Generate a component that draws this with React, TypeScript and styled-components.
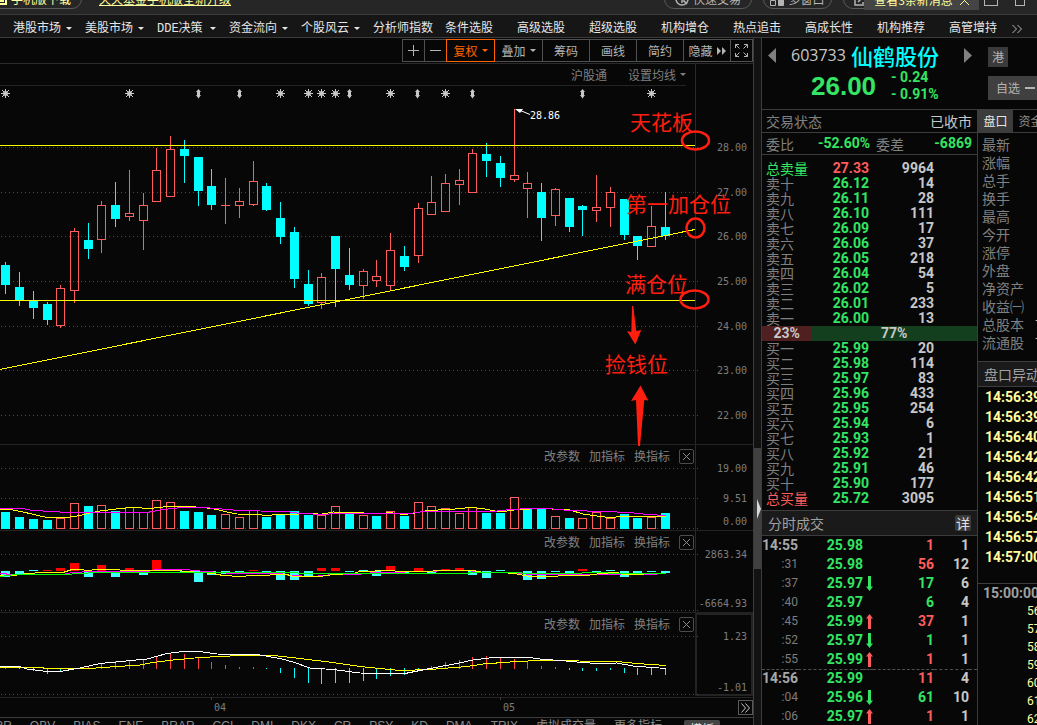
import React from "react";
import styled, { createGlobalStyle } from "styled-components";

const cjk = '"Noto Sans CJK SC", sans-serif';
const c = {
  bg: "#070707",
  line: "#3c3c3c",
  faint: "#232323",
  grey: "#808080",
  light: "#c8c8c8",
  green: "#33e562",
  red: "#ff5c5c",
  cyan: "#00ffff",
  yellow: "#ffffa0",
  mark: "#ff1e0f",
};

const GlobalStyle = createGlobalStyle`
  *, *::before, *::after { box-sizing: border-box; }
  body { margin: 0; background: ${c.bg}; font: 12px/16px ${cjk}; color: ${c.light}; }
  button { margin: 0; padding: 0; border: 0; background: none; color: inherit; font: inherit; white-space: nowrap; cursor: pointer; }
  svg { display: block; flex: none; }
  table { border-collapse: collapse; border-spacing: 0; }
  td, th { padding: 0; font-weight: inherit; text-align: left; }
`;

const Page = styled.div`
  display: flex;
  flex-direction: column;
  height: 100vh;
  overflow: hidden;
`;

/* ---------- top bar ---------- */
const TopBar = styled.header`
  display: flex;
  align-items: flex-end;
  flex: none;
  height: 15px;
  overflow: hidden;
  background: #262626;
  border-bottom: 1px solid ${c.line};
`;
const Pill = styled.button<{ $ml?: number; $w: number; $accent?: boolean }>`
  display: flex;
  align-items: center;
  justify-content: center;
  gap: 4px;
  flex: none;
  width: ${(p) => p.$w}px;
  height: 20px;
  margin: 0 0 5px ${(p) => p.$ml ?? 0}px;
  border: 1px solid #5a5a5a;
  border-radius: 10px;
  color: ${(p) => (p.$accent ? "#ffff9c" : "#b4b4b4")};
`;
const PromoLink = styled.a`
  flex: none;
  margin: 0 auto 7px 17px;
  color: #ffff9c;
  line-height: 16px;
`;
const Notice = styled.div`
  display: flex;
  align-items: center;
  justify-content: center;
  gap: 7px;
  flex: none;
  width: 115px;
  height: 20px;
  margin: 0 5px 4px -14px;
  background: #444;
  color: #ffff9c;
  z-index: 1;
`;
const WindowButton = styled.button<{ $w: number; $gap: number }>`
  flex: none;
  width: ${(p) => p.$w}px;
  height: 12px;
  margin: 0 ${(p) => p.$gap}px 8px 0;
  border: 1px solid #b4b4b4;
`;

/* ---------- navigation ---------- */
const Nav = styled.nav`
  display: flex;
  align-items: center;
  flex: none;
  height: 23px;
  padding: 5px 0 0 13px;
  background: #161616;
  border-bottom: 1px solid ${c.line};
`;
const NavButton = styled.button`
  display: flex;
  align-items: center;
  gap: 5px;
  flex: none;
  width: 72px;
  color: #e6e6e6;
  font-family: "Liberation Mono", ${cjk};
  span { min-width: 48px; text-align: left; }
`;
const MoreButton = styled.button`
  margin-left: -9px;
`;
const Caret = styled.i`
  width: 0;
  height: 0;
  border: 3px solid transparent;
  border-top-color: currentColor;
  border-bottom: 0;
`;

/* ---------- layout ---------- */
const Body = styled.main`
  display: grid;
  grid-template-columns: minmax(0, 1fr) 7px 276px;
  flex: 1;
  min-height: 0;
`;
const ChartColumn = styled.section`
  display: flex;
  flex-direction: column;
  min-width: 0;
  border-right: 1px solid ${c.line};
`;
const Strip = styled.div`
  display: flex;
  flex-direction: column;
  background: #121212;
  padding-top: 410px;
`;
const StripThumb = styled.button`
  display: flex;
  align-items: center;
  justify-content: flex-end;
  height: 121px;
  background: #404040;
`;

/* ---------- chart tools ---------- */
const Toolbar = styled.div`
  display: flex;
  justify-content: flex-end;
  flex: none;
  height: 26px;
  padding-top: 1px;
  border-bottom: 1px solid #2a2a2a;
`;
const Tool = styled.button<{ $w: number; $active?: boolean }>`
  display: flex;
  align-items: center;
  justify-content: center;
  gap: 4px;
  width: ${(p) => p.$w}px;
  height: 23px;
  margin-left: -1px;
  border: 1px solid ${(p) => (p.$active ? "#ff6400" : "#505050")};
  color: ${(p) => (p.$active ? "#ff6400" : "#b4b4b4")};
  position: relative;
  z-index: ${(p) => (p.$active ? 1 : 0)};
`;
const SubTools = styled.div`
  display: flex;
  justify-content: flex-end;
  align-items: center;
  gap: 21px;
  flex: none;
  height: 22px;
  margin-right: 67px;
  border-bottom: 1px solid ${c.faint};
  color: ${c.grey};
  button { display: flex; align-items: center; gap: 4px; }
`;
const Panel = styled.div<{ $h: number }>`
  position: relative;
  flex: none;
  height: ${(p) => p.$h}px;
  border-bottom: 1px solid ${c.faint};
`;
const PanelActions = styled.div`
  position: absolute;
  top: 3px;
  right: 59px;
  display: flex;
  align-items: center;
  gap: 9px;
  color: ${c.grey};
`;
const CloseButton = styled.button`
  display: flex;
  align-items: center;
  justify-content: center;
  width: 15px;
  height: 15px;
  border: 1px solid #4c4c4c;
  border-radius: 2px;
`;
const Plot = styled.svg`
  width: 100%;
  height: 100%;
  overflow: visible;
`;
const AxisText = styled.text`
  font: 10px "DejaVu Sans Mono", monospace;
  fill: #7d7d7d;
  text-anchor: end;
`;
const TimeAxis = styled.div`
  position: relative;
  flex: none;
  height: 19px;
`;
const ExpandButton = styled.button`
  position: absolute;
  right: 0;
  top: 2px;
  display: flex;
  align-items: center;
  justify-content: center;
  width: 15px;
  height: 15px;
  border: 1px solid #5a5a5a;
`;
const IndicatorTabs = styled.div`
  display: flex;
  align-items: flex-start;
  flex: none;
  gap: 18px;
  height: 26px;
  padding-right: 33px;
  justify-content: flex-end;
  border-top: 1px solid ${c.line};
  font-family: "Liberation Sans", ${cjk};
  color: #8c8c8c;
  button { flex: none; height: 20px; line-height: 16px; }
`;
const TabLabel = styled.button`
  padding-bottom: 4px;
`;
const TemplateTab = styled.button`
  width: 36px;
  margin: 2px 0 0 4px;
  border-radius: 2px;
  background: #444;
  color: #e0e0e0;
`;

/* ---------- quote side ---------- */
const Side = styled.aside`
  display: flex;
  flex-direction: column;
  min-height: 0;
  border-left: 1px solid ${c.line};
  overflow: hidden;
`;
const StockHeader = styled.div`
  display: grid;
  grid-template-columns: 226px 1fr;
  flex: none;
  height: 72px;
  border-bottom: 1px solid ${c.line};
`;
const StockInfo = styled.div`
  padding-top: 3px;
`;
const StockTitle = styled.div`
  display: flex;
  align-items: center;
  height: 28px;
  padding: 0 16px 0 6px;
`;
const Code = styled.span`
  margin-left: 15px;
  font: 16px/28px "Open Sans", sans-serif;
`;
const Name = styled.strong`
  margin: 0 auto 0 5px;
  font-size: 22px;
  line-height: 28px;
  font-weight: 500;
  color: ${c.cyan};
`;
const PriceRow = styled.div`
  display: flex;
  align-items: center;
  gap: 15px;
  padding-left: 49px;
  color: ${c.green};
`;
const BigPrice = styled.strong`
  font: bold 26px/32px "Liberation Sans", sans-serif;
`;
const Change = styled.div`
  font: bold 14px/17px Roboto, sans-serif;
`;
const StockButtons = styled.div`
  display: flex;
  flex-direction: column;
  align-items: flex-start;
  gap: 9px;
  padding-top: 9px;
  color: #b4b4b4;
`;
const TagButton = styled.button`
  width: 20px;
  height: 20px;
  background: #3a3a3a;
`;
const WatchButton = styled.button`
  display: flex;
  align-items: center;
  gap: 5px;
  width: 60px;
  height: 24px;
  padding-left: 8px;
  background: #404040;
`;
const Columns = styled.div`
  display: grid;
  grid-template-columns: 215px minmax(0, 1fr);
  flex: 1;
  min-height: 0;
`;
const Book = styled.div`
  display: flex;
  flex-direction: column;
  min-height: 0;
  overflow: hidden;
`;
const InfoRow = styled.div<{ $h: number }>`
  display: flex;
  align-items: center;
  flex: none;
  height: ${(p) => p.$h}px;
  padding: 0 5px 0 4px;
  border-bottom: 1px solid ${c.line};
  font-size: 14px;
  color: ${c.grey};
`;
const Num = styled.b<{ $color?: string }>`
  display: block;
  font: bold 14px/15px Roboto, sans-serif;
  color: ${(p) => p.$color ?? c.light};
`;
const RatioNum = styled(Num)`
  margin: 0 6px 0 24px;
`;
const EndNum = styled(Num)`
  margin-left: auto;
`;
const Status = styled.span`
  margin-left: auto;
  color: ${c.light};
`;
const Levels = styled.div`
  flex: none;
  padding: 6px 0 4px;
`;
const LevelTable = styled.table`
  width: 100%;
  table-layout: fixed;
  td, th { height: 15px; line-height: 15px; white-space: nowrap; vertical-align: top; }
  th { width: 48px; padding-left: 4px; font-size: 14px; }
  td { text-align: right; font-size: 12px; }
  td:nth-child(2) { width: 59px; }
  td:nth-child(3) { width: 65px; }
`;
const Label = styled.span<{ $color?: string }>`
  display: block;
  height: 15px;
  line-height: 14px;
  color: ${(p) => p.$color ?? c.grey};
`;
const Ratio = styled.div`
  display: grid;
  grid-template-columns: 23fr 77fr;
  height: 15px;
  b { text-align: center; }
  b:first-child { background: #501f20; }
  b:last-child { background: #143f1f; }
`;
const SectionTitle = styled.div`
  display: flex;
  align-items: center;
  justify-content: space-between;
  flex: none;
  height: 26px;
  padding: 0 6px;
  background: #1a1a1a;
  border: solid ${c.line};
  border-width: 1px 0;
  font-size: 14px;
  color: #a0a0a0;
  white-space: nowrap;
`;
const DetailButton = styled.button`
  width: 16px;
  height: 16px;
  border-radius: 2px;
  background: #3a3a3a;
  color: #e0e0e0;
  line-height: 16px;
`;
const TickTable = styled.table`
  flex: none;
  width: 100%;
  table-layout: fixed;
  td, th { height: 19px; text-align: right; line-height: 15px; }
  th { width: 36px; font: 12px/15px Roboto, sans-serif; color: #7d7d7d; }
  td:nth-child(2) { width: 65px; }
  td:nth-child(3) { width: 10px; }
  td:nth-child(3) svg { margin-left: 3px; }
  td:nth-child(4) { width: 61px; }
  td:nth-child(5) { width: 35px; }
`;
const TickRow = styled.tr<{ $dashed?: boolean }>`
  td, th { border-top: ${(p) => (p.$dashed ? "1px dashed #505050" : "0")}; }
`;
const Facts = styled.div`
  display: flex;
  flex-direction: column;
  min-width: 0;
  border-left: 1px solid ${c.line};
  overflow: hidden;
`;
const FactTabs = styled.div`
  display: flex;
  flex: none;
  height: 23px;
  margin-bottom: 2px;
  border-bottom: 1px solid ${c.line};
`;
const FactTab = styled.button<{ $active?: boolean }>`
  flex: none;
  width: 35px;
  background: ${(p) => (p.$active ? "#3c3c3c" : "transparent")};
  color: ${(p) => (p.$active ? "#e6e6e6" : "#8c8c8c")};
`;
const FactList = styled.dl`
  display: grid;
  grid-template-columns: 53px 1fr;
  grid-auto-rows: 18px;
  flex: none;
  margin: 0 0 10px;
  padding-left: 4px;
  font-size: 14px;
  line-height: 18px;
  color: ${c.grey};
  white-space: nowrap;
  dd { margin: 0; color: ${c.light}; }
`;
const AlertList = styled.ol`
  flex: none;
  margin: 0;
  padding: 0 0 16px 7px;
  list-style: none;
  border-bottom: 1px solid ${c.line};
  font: bold 14px/20px Roboto, sans-serif;
  color: ${c.yellow};
`;
const SecondsList = styled.ol`
  margin: 0;
  padding: 0 0 0 49px;
  list-style: none;
  font: 12px/18px Roboto, sans-serif;
  color: ${c.yellow};
`;
const ClockTitle = styled.div`
  padding-left: 5px;
  font: bold 14px/18px Roboto, sans-serif;
  color: #a0a0a0;
`;

/* ---------- data ---------- */
const navItems: [string, boolean][] = [
  ["港股市场", true], ["美股市场", true], ["DDE决策", true], ["资金流向", true], ["个股风云", true],
  ["分析师指数", false], ["条件选股", false], ["高级选股", false], ["超级选股", false], ["机构增仓", false],
  ["热点追击", false], ["高成长性", false], ["机构推荐", false], ["高管增持", false],
];

// high, body top, body bottom, low, rising
const candles: [number, number, number, number, number][] = [
  [262, 265, 285, 294, 0], [272, 287, 300, 306, 0], [291, 301, 308, 319, 0], [302, 304, 320, 325, 0],
  [285, 288, 326, 328, 1], [228, 231, 291, 303, 1], [223, 240, 249, 259, 0], [201, 205, 240, 253, 1],
  [182, 205, 219, 227, 0], [170, 213, 217, 221, 1], [193, 205, 221, 250, 1], [148, 170, 202, 202, 1],
  [136, 149, 197, 197, 1], [140, 149, 156, 183, 0], [157, 157, 191, 206, 0], [169, 186, 205, 210, 0],
  [178, 205, 206, 224, 1], [188, 201, 206, 218, 1], [161, 181, 205, 206, 1], [183, 186, 210, 211, 0],
  [202, 218, 237, 244, 0], [227, 232, 279, 288, 0], [270, 284, 304, 306, 0], [273, 277, 303, 309, 1],
  [236, 236, 269, 307, 0], [248, 275, 285, 290, 0], [269, 271, 286, 299, 1], [260, 276, 281, 287, 1],
  [233, 250, 286, 291, 1], [246, 256, 267, 271, 0], [203, 208, 256, 263, 1], [176, 202, 215, 215, 1],
  [174, 183, 212, 212, 1], [169, 180, 185, 205, 1], [149, 153, 193, 193, 1], [143, 154, 161, 177, 0],
  [156, 163, 178, 187, 0], [109, 175, 180, 182, 1], [172, 183, 189, 218, 1], [183, 192, 218, 241, 0],
  [188, 189, 216, 226, 1], [198, 198, 227, 232, 0], [205, 206, 210, 236, 0], [175, 207, 211, 222, 1],
  [187, 192, 208, 227, 1], [199, 199, 235, 240, 0], [236, 236, 246, 260, 0], [206, 226, 247, 247, 1],
  [192, 227, 236, 240, 0],
];
// top of each volume bar; negative means a rising day
const volumes = [
  512, 517, 519, 520, -518, -503, 506, -505, 511, -507, -512, -500, -502, 511, 512, 515, -514, -517, -510, 517,
  514, 511, 515, -515, -506, 513, -515, 516, -511, 516, -502, -506, -508, -513, -507, 513, 513, -497, 509, 509,
  -516, 518, -518, -512, -518, 514, 518, -517, 513,
];
// height of each flow bar around the baseline, up positive
const flows = [
  -6, -3, 1, 1.5, 3, 8, -6, 6, -6, 3, -4, 11, 0, -2, -11, -4, -3, -3, 1.5, -2, -9, -9, -5, 3, 3, -1, 1, -5,
  5, -2, 3, -2, 2, 3, -4, -7, 1, 0, -9, -8, -1, -5, 2, -2, 1, -6, -3, -1, -2,
];
const momentum = [
  1, -1, -3, -6, -4, 1, 2, 6, 8, 9, 9, 13, 15, 15, 12, 7, 4, 2, 2, -1, -5, -10, -15, -16, -15, -15, -13, -11, -8,
  -7, -1, 3, 7, 9, 12, 13, 12, 10, 7, 3, 2, -2, -3, -3, -2, -5, -7, -7, -7,
];
const dayX = (i: number) => Math.round(5.3 + 13.74 * i);
const stars = [5, 129, 280, 308, 321, 335, 390, 445, 651];
const spindles = [198, 239, 349, 417, 472, 582];

type Level = [string, string, string, string?, string?];
const asks: Level[] = [
  ["总卖量", "27.33", "9964", c.green, c.red],
  ["卖十", "26.12", "14"], ["卖九", "26.11", "28"], ["卖八", "26.10", "111"], ["卖七", "26.09", "17"],
  ["卖六", "26.06", "37"], ["卖五", "26.05", "218"], ["卖四", "26.04", "54"], ["卖三", "26.02", "5"],
  ["卖二", "26.01", "233"], ["卖一", "26.00", "13"],
];
const bids: Level[] = [
  ["买一", "25.99", "20"], ["买二", "25.98", "114"], ["买三", "25.97", "83"], ["买四", "25.96", "433"],
  ["买五", "25.95", "254"], ["买六", "25.94", "6"], ["买七", "25.93", "1"], ["买八", "25.92", "21"],
  ["买九", "25.91", "46"], ["买十", "25.90", "177"],
  ["总买量", "25.72", "3095", c.red],
];
// time, price, direction, volume, volume is a buy, count
const ticks: [string, string, number, string, number, string][] = [
  ["14:55", "25.98", 0, "1", 1, "1"], [":31", "25.98", 0, "56", 1, "12"], [":37", "25.97", -1, "17", 0, "6"],
  [":40", "25.97", 0, "6", 0, "4"], [":45", "25.99", 1, "37", 1, "1"], [":52", "25.97", -1, "1", 0, "1"],
  [":55", "25.99", 1, "1", 1, "1"], ["14:56", "25.99", 0, "11", 1, "4"], [":04", "25.96", -1, "61", 0, "10"],
  [":06", "25.97", 1, "1", 1, "1"],
];
const facts = ["最新", "涨幅", "总手", "换手", "最高", "今开", "涨停", "外盘", "净资产", "收益㈠", "总股本", "流通股"];
const alerts = ["14:56:39", "14:56:39", "14:56:40", "14:56:42", "14:56:42", "14:56:51", "14:56:54", "14:56:57", "14:57:00"];
const indicators = ["RR", "OBV", "BIAS", "ENE", "BRAR", "CCI", "DMI", "DKX", "CR", "PSY", "KD", "DMA", "TRIX", "虚拟成交量", "更多指标"];

/* ---------- chart pieces ---------- */
const GridLine = ({ y }: { y: number }) => (
  <line x1="1" x2="698" y1={y + 0.5} y2={y + 0.5} stroke="#484848" strokeDasharray="1 3" shapeRendering="crispEdges" />
);
const AxisRule = ({ y1, y2 }: { y1: number; y2: number }) => (
  <line x1="695.5" x2="695.5" y1={y1} y2={y2} stroke="#2a2a2a" />
);
const Curve = ({ points, color }: { points: string; color: string }) => (
  <polyline points={points} fill="none" stroke={color} shapeRendering="crispEdges" />
);
const Actions = () => (
  <PanelActions>
    <button>改参数</button>
    <button>加指标</button>
    <button>换指标</button>
    <CloseButton aria-label="关闭">
      <svg width="7" height="7" stroke="#8c8c8c" fill="none"><path d="M0 0L7 7M7 0L0 7" /></svg>
    </CloseButton>
  </PanelActions>
);

const MainChart = () => (
  <Plot viewBox="0 86 753 358" preserveAspectRatio="xMaxYMin meet">
    <AxisRule y1={64} y2={444} />
    {[147, 192, 236, 281, 326, 370, 415].map((y, i) => (
      <React.Fragment key={y}>
        <GridLine y={y} />
        <AxisText x="747" y={y + 4}>{28 - i}.00</AxisText>
      </React.Fragment>
    ))}
    <g stroke="#c8c8c8" fill="#c8c8c8">
      {stars.map((x) => (
        <g key={x} transform={`translate(${x + 0.5} 93.5)`}>
          <path d="M-4.5 0H4.5M0 -4.5V4.5M-3.5 -3.5L3.5 3.5M3.5 -3.5L-3.5 3.5" />
          <circle r="2" />
        </g>
      ))}
      {spindles.map((x) => (
        <path key={x} stroke="none" d={`M${x + 0.5} 89l2.5 3h-1v3h1l-2.5 3.5l-2.5 -3.5h1v-3h-1z`} />
      ))}
    </g>
    {candles.map(([hi, top, bottom, lo, up], i) => {
      const x = dayX(i);
      return up ? (
        <g key={i} stroke={c.red} fill="none">
          <path d={`M${x + 0.5} ${hi}V${top}M${x + 0.5} ${bottom}V${lo}`} />
          {bottom - top < 2 ? (
            <path d={`M${x - 4} ${top + 0.5}h9`} />
          ) : (
            <rect x={x - 3.5} y={top + 0.5} width="8" height={bottom - top - 1} />
          )}
        </g>
      ) : (
        <g key={i} fill={c.cyan}>
          <rect x={x} y={hi} width="1" height={lo - hi} />
          <rect x={x - 4} y={top} width="9" height={bottom - top} />
        </g>
      );
    })}
    <g stroke="#ffff00" fill="none" shapeRendering="crispEdges">
      <path d="M0 145.5H695M0 300.5H695M0 369.5L695 229.5" />
    </g>
    <path d="M518 109.5L530 114.5" stroke="#fff" />
    <path d="M515 109l8 0l-3 4z" fill="#fff" />
    <text x="530" y="119" fill="#fff" fontFamily='"DejaVu Sans Mono", monospace' fontSize="10">28.86</text>
    <g fill="none" stroke={c.mark} strokeWidth="2.5">
      <ellipse cx="695.5" cy="140.5" rx="13.5" ry="9" />
      <ellipse cx="695.5" cy="228" rx="9" ry="9.5" />
      <ellipse cx="694.5" cy="299.5" rx="14" ry="9" />
    </g>
    <g fill={c.mark} fontSize="21" fontFamily={cjk}>
      <text x="630" y="130">天花板</text>
      <text x="626" y="212">第一加仓位</text>
      <text x="625" y="292">满仓位</text>
      <text x="605" y="372">捡钱位</text>
      <path d="M632 306L633.3 306L636.3 331L641.3 330L635.3 344.5L627 331L631.3 332Z" />
      <path d="M640.5 385.5L648.3 400.5L644.3 400L640 446H638L636 400L631 401Z" />
    </g>
  </Plot>
);

const VolumeChart = () => (
  <Plot viewBox="0 445 753 85" preserveAspectRatio="xMaxYMin meet">
    <AxisRule y1={445} y2={530} />
    <GridLine y={468} /><GridLine y={498} /><GridLine y={528} />
    <AxisText x="747" y="472">19.00</AxisText>
    <AxisText x="747" y="502">9.51</AxisText>
    <AxisText x="747" y="525">0.00</AxisText>
    {volumes.map((v, i) => {
      const x = dayX(i), top = Math.abs(v);
      return v < 0
        ? <rect key={i} x={x - 3.5} y={top + 0.5} width="8" height={528 - top} fill={c.bg} stroke={c.red} />
        : <rect key={i} x={x - 4} y={top} width="9" height={529 - top} fill={c.cyan} />;
    })}
    <Curve color="#ffff00" points="0,509.5 13,510 23,512 32,514 40,516 47,517.5 67,517.5 80,515.5 90,513 100,511 120,508.5 133,507.5 150,508.5 167,506.5 190,506.5 207,508 217,509.5 227,512 237,514 257,514.5 267,515.5 277,514.5 300,514 313,513 320,514.5 333,512 357,512.5 377,514 390,512.5 403,514.5 413,513.5 427,510.5 450,509.5 470,507.5 483,508.5 495,511 507,511 517,509.5 543,508.5 570,510 583,514 600,516.5 610,517.5 623,516.5 666,516.5" />
    <Curve color="#ff00ff" points="0,508.5 23,508.5 32,510.5 53,511.5 67,512.5 147,512.5 160,510 177,508 203,507.5 217,508.5 233,510 260,511 287,511.5 300,513.5 325,514.5 333,513.5 410,513.5 423,511.5 493,511.5 510,509.5 530,508.5 547,508.5 570,510.5 603,511.5 630,512.5 647,514.5 666,515.5" />
  </Plot>
);

const FlowChart = () => (
  <Plot viewBox="0 531 753 81" preserveAspectRatio="xMaxYMin meet">
    <AxisRule y1={531} y2={612} />
    <GridLine y={554} /><GridLine y={610} />
    <AxisText x="747" y="558">2863.34</AxisText>
    <AxisText x="747" y="607">-6664.93</AxisText>
    <g shapeRendering="crispEdges">
      {flows.map((v, i) => {
        const h = Math.abs(v);
        const color = v > 1 ? "#ff0000" : "#40ffff";
        return <rect key={i} x={dayX(i) - 4} y={v > 0 ? 571 - h : 571} width="9" height={h} fill={color} />;
      })}
    </g>
    <Curve color="#ff00ff" points="0,573.5 13,574.5 63,574.5 72,572.5 93,571.5 147,571.5 157,569.5 187,569.5 193,570.5 213,572 233,573.5 280,573.5 290,575.5 313,576.5 333,574.5 357,574.5 370,573 390,572.5 437,571 467,570.5 483,572.5 517,573 530,574.5 657,574.5" />
    <Curve color="#ffff00" points="0,575.5 13,575.5 27,573.5 43,572.5 63,572.5 72,569.5 80,569.5 87,570.5 97,569.5 107,569.5 133,570.5 177,570.5 187,571.5 213,573.5 223,575.5 240,576.5 253,575.5 287,574.5 293,576.5 320,576.5 333,574.5 353,573.5 360,571.5 390,570.5 400,571.5 423,571.5 443,570.5 473,570.5 483,572.5 503,572.5 517,574 530,576.5 587,575.5 600,573.5 617,572.5 623,574.5 666,573.5" />
    <Curve color="#00ff00" points="0,576.5 15,574.5 67,574.5 77,573.5 100,572.5 213,572.5 380,573.5 467,573.5 470,572.5 517,572.5 527,573.5 577,573.5 587,572.5 603,572.5 613,573.5 666,573.5" />
  </Plot>
);

const MomentumChart = () => (
  <Plot viewBox="0 613 753 84" preserveAspectRatio="xMaxYMin meet">
    <rect x="696" y="614" width="56" height="81" fill="none" stroke={c.faint} strokeWidth="2" />
    <GridLine y={636} /><GridLine y={694} />
    <AxisText x="747" y="640">1.23</AxisText>
    <AxisText x="747" y="691">-1.01</AxisText>
    {momentum.map((v, i) => (
      <rect key={i} x={dayX(i)} y={v > 0 ? 669 - v : 668} width="1" height={Math.abs(v)} fill={v > 0 ? "#ff4040" : c.cyan} />
    ))}
    <Curve color="#ffff00" points="0,667.5 40,667.5 47,668.5 90,668.5 103,667.5 140,665 153,662.5 173,660 200,657.5 240,655.5 273,655.5 300,658.5 333,662.5 360,666.5 380,668.5 400,670.5 430,669.5 467,666.5 483,664 517,661.5 540,660.5 617,661.5 637,663.5 666,665.5" />
    <Curve color="#ffffff" points="0,666.5 20,666.5 27,669 47,671.5 60,671.5 80,668 100,663.5 147,659 167,653.5 183,651.5 200,651.5 217,654 257,654.5 280,658.5 293,662 310,668 333,669.5 360,673 405,673.5 430,668.5 457,663.5 473,660 493,657.5 530,657.5 540,659 560,660.5 577,662 597,663.5 617,663 633,666 666,668.5" />
  </Plot>
);

const TickArrow = ({ dir }: { dir: number }) =>
  dir === 0 ? null : (
    <svg width="7" height="15" fill={dir > 0 ? c.red : c.green}>
      <path d={dir > 0 ? "M3.5 0L7 4.5H5V15H2V4.5H0Z" : "M3.5 15L7 10.5H5V0H2V10.5H0Z"} />
    </svg>
  );

const LevelRows = ({ rows }: { rows: Level[] }) => (
  <LevelTable>
    <tbody>
      {rows.map(([label, price, volume, labelColor, priceColor]) => (
        <tr key={label}>
          <th scope="row"><Label $color={labelColor}>{label}</Label></th>
          <td><Num $color={priceColor ?? c.green}>{price}</Num></td>
          <td><Num>{volume}</Num></td>
          <td />
        </tr>
      ))}
    </tbody>
  </LevelTable>
);

export default function App() {
  return (
    <Page>
      <GlobalStyle />
      <TopBar>
        <Pill $w={96} $ml={-14} $accent>
          <svg width="10" height="12" fill="none" stroke="#ffff9c" strokeWidth="2"><path d="M1 1h8v10H1zM3 8h4" /></svg>
          手机版下载
        </Pill>
        <PromoLink href="#app">天天基金手机版全新升级</PromoLink>
        <Pill $w={88}>
          <svg width="14" height="14" fill="none" stroke="#b4b4b4" strokeWidth="1.5"><circle cx="7" cy="7" r="6" /><path d="M4 5h5v5M7 3v8M9 9l3 3" /></svg>
          快速交易
        </Pill>
        <Pill $w={69} $ml={11}>
          <svg width="14" height="14" fill="none" stroke="#b4b4b4"><path d="M.5 .5h5v5h-5zM.5 8.5h5v5h-5zM8.5 .5h5v5h-5z" /><path fill="#b4b4b4" d="M8.5 7.5h5v6h-5z" /></svg>
          多窗口
        </Pill>
        <Pill $w={35} $ml={11} aria-label="编辑">
          <svg width="14" height="14" fill="none" stroke="#b4b4b4" strokeWidth="1.5"><path d="M1 1h12v12H1zM4 10l6-6M8 11h3" /></svg>
        </Pill>
        <Notice>
          查看3条新消息
          <svg width="9" height="9" fill="none" stroke="#ffff9c"><path d="M0 0L9 9M9 0L0 9" /></svg>
        </Notice>
        <WindowButton $w={14} $gap={17} aria-label="最小化" />
        <WindowButton $w={10} $gap={12} aria-label="还原" />
      </TopBar>

      <Nav>
        {navItems.map(([text, caret]) => (
          <NavButton key={text}><span>{text}</span>{caret && <Caret />}</NavButton>
        ))}
        <MoreButton aria-label="更多">
          <svg width="10" height="8" fill="none" stroke="#b4b4b4"><path d="M.5 0l4 4l-4 4M5.5 0l4 4l-4 4" /></svg>
        </MoreButton>
      </Nav>

      <Body>
        <ChartColumn>
          <Toolbar>
            <Tool $w={23} aria-label="放大"><svg width="11" height="11" stroke="#b4b4b4"><path d="M0 5.5h11M5.5 0v11" /></svg></Tool>
            <Tool $w={23} aria-label="缩小"><svg width="11" height="11" stroke="#b4b4b4"><path d="M0 5.5h11" /></svg></Tool>
            <Tool $w={49} $active>复权<Caret /></Tool>
            <Tool $w={49}>叠加<Caret /></Tool>
            <Tool $w={48}>筹码</Tool>
            <Tool $w={48}>画线</Tool>
            <Tool $w={48}>简约</Tool>
            <Tool $w={48}>隐藏<svg width="9" height="8" fill="#b4b4b4"><path d="M0 0l4 4l-4 4zM5 0l4 4l-4 4z" /></svg></Tool>
            <Tool $w={23} aria-label="全屏">
              <svg width="13" height="13" fill="none" stroke="#b4b4b4"><path d="M.5 4V.5H4M9 .5h3.5V4M.5 9v3.5H4M12.5 9v3.5H9M.5 .5l4 4M12.5 .5l-4 4M.5 12.5l4-4M12.5 12.5l-4-4" /></svg>
            </Tool>
          </Toolbar>
          <SubTools>
            <button>沪股通</button>
            <button>设置均线<Caret /></button>
          </SubTools>
          <Panel $h={359}><MainChart /></Panel>
          <Panel $h={86}><VolumeChart /><Actions /></Panel>
          <Panel $h={82}><FlowChart /><Actions /></Panel>
          <Panel $h={85}><MomentumChart /><Actions /></Panel>
          <TimeAxis>
            <Plot viewBox="0 698 753 18" preserveAspectRatio="xMaxYMin meet">
              <path d="M211.5 697v3M500.5 697v3" stroke="#3c3c3c" />
              <AxisText x="226" y="711">04</AxisText>
              <AxisText x="515" y="711">05</AxisText>
            </Plot>
            <ExpandButton aria-label="展开">
              <svg width="9" height="10" fill="none" stroke="#c8c8c8"><path d="M.5 .5l4 4.5l-4 4.5M4.5 .5l4 4.5l-4 4.5" /></svg>
            </ExpandButton>
          </TimeAxis>
          <IndicatorTabs>
            {indicators.map((t) => <TabLabel key={t}>{t}</TabLabel>)}
            <TemplateTab>模板</TemplateTab>
          </IndicatorTabs>
        </ChartColumn>

        <Strip>
          <StripThumb aria-label="收起">
            <svg width="5" height="20" fill="#d8d8d8"><path d="M1 0L5 10L1 20Z" /></svg>
          </StripThumb>
        </Strip>

        <Side>
          <StockHeader>
            <StockInfo>
              <StockTitle>
                <button aria-label="上一只"><svg width="8" height="15" fill="#808080"><path d="M8 0v15L0 7.5z" /></svg></button>
                <Code>603733</Code>
                <Name>仙鹤股份</Name>
                <button aria-label="下一只"><svg width="8" height="15" fill="#808080"><path d="M0 0v15l8-7.5z" /></svg></button>
              </StockTitle>
              <PriceRow>
                <BigPrice>26.00</BigPrice>
                <Change>- 0.24<br />- 0.91%</Change>
              </PriceRow>
            </StockInfo>
            <StockButtons>
              <TagButton>港</TagButton>
              <WatchButton>自选<svg width="10" height="2" fill="#b4b4b4"><path d="M0 0h10v2H0z" /></svg></WatchButton>
            </StockButtons>
          </StockHeader>
          <Columns>
            <Book>
              <InfoRow $h={23}>交易状态<Status>已收市</Status></InfoRow>
              <InfoRow $h={22}>
                委比
                <RatioNum $color={c.green}>-52.60%</RatioNum>
                委差
                <EndNum $color={c.green}>-6869</EndNum>
              </InfoRow>
              <Levels>
                <LevelRows rows={asks} />
                <Ratio><Num>23%</Num><Num>77%</Num></Ratio>
                <LevelRows rows={bids} />
              </Levels>
              <SectionTitle>分时成交<DetailButton>详</DetailButton></SectionTitle>
              <TickTable>
                <tbody>
                  {ticks.map(([time, price, dir, vol, buy, count]) => (
                    <TickRow key={time} $dashed={time === "14:56"}>
                      <th scope="row">{time.length > 3 ? <Num $color="#a8a8a8">{time}</Num> : time}</th>
                      <td><Num $color={c.green}>{price}</Num></td>
                      <td><TickArrow dir={dir} /></td>
                      <td><Num $color={buy ? c.red : c.green}>{vol}</Num></td>
                      <td><Num>{count}</Num></td>
                      <td />
                    </TickRow>
                  ))}
                </tbody>
              </TickTable>
            </Book>
            <Facts>
              <FactTabs><FactTab $active>盘口</FactTab><FactTab>资金</FactTab></FactTabs>
              <FactList>
                {facts.map((f, i) => (
                  <React.Fragment key={f}><dt>{f}</dt><dd>{i > 9 ? "7" : ""}</dd></React.Fragment>
                ))}
              </FactList>
              <SectionTitle>盘口异动</SectionTitle>
              <AlertList>{alerts.map((t, i) => <li key={i}>{t}</li>)}</AlertList>
              <ClockTitle>15:00:00</ClockTitle>
              <SecondsList>{[56, 57, 58, 59, 60, 61, 62].map((n) => <li key={n}>{n}</li>)}</SecondsList>
            </Facts>
          </Columns>
        </Side>
      </Body>
    </Page>
  );
}
